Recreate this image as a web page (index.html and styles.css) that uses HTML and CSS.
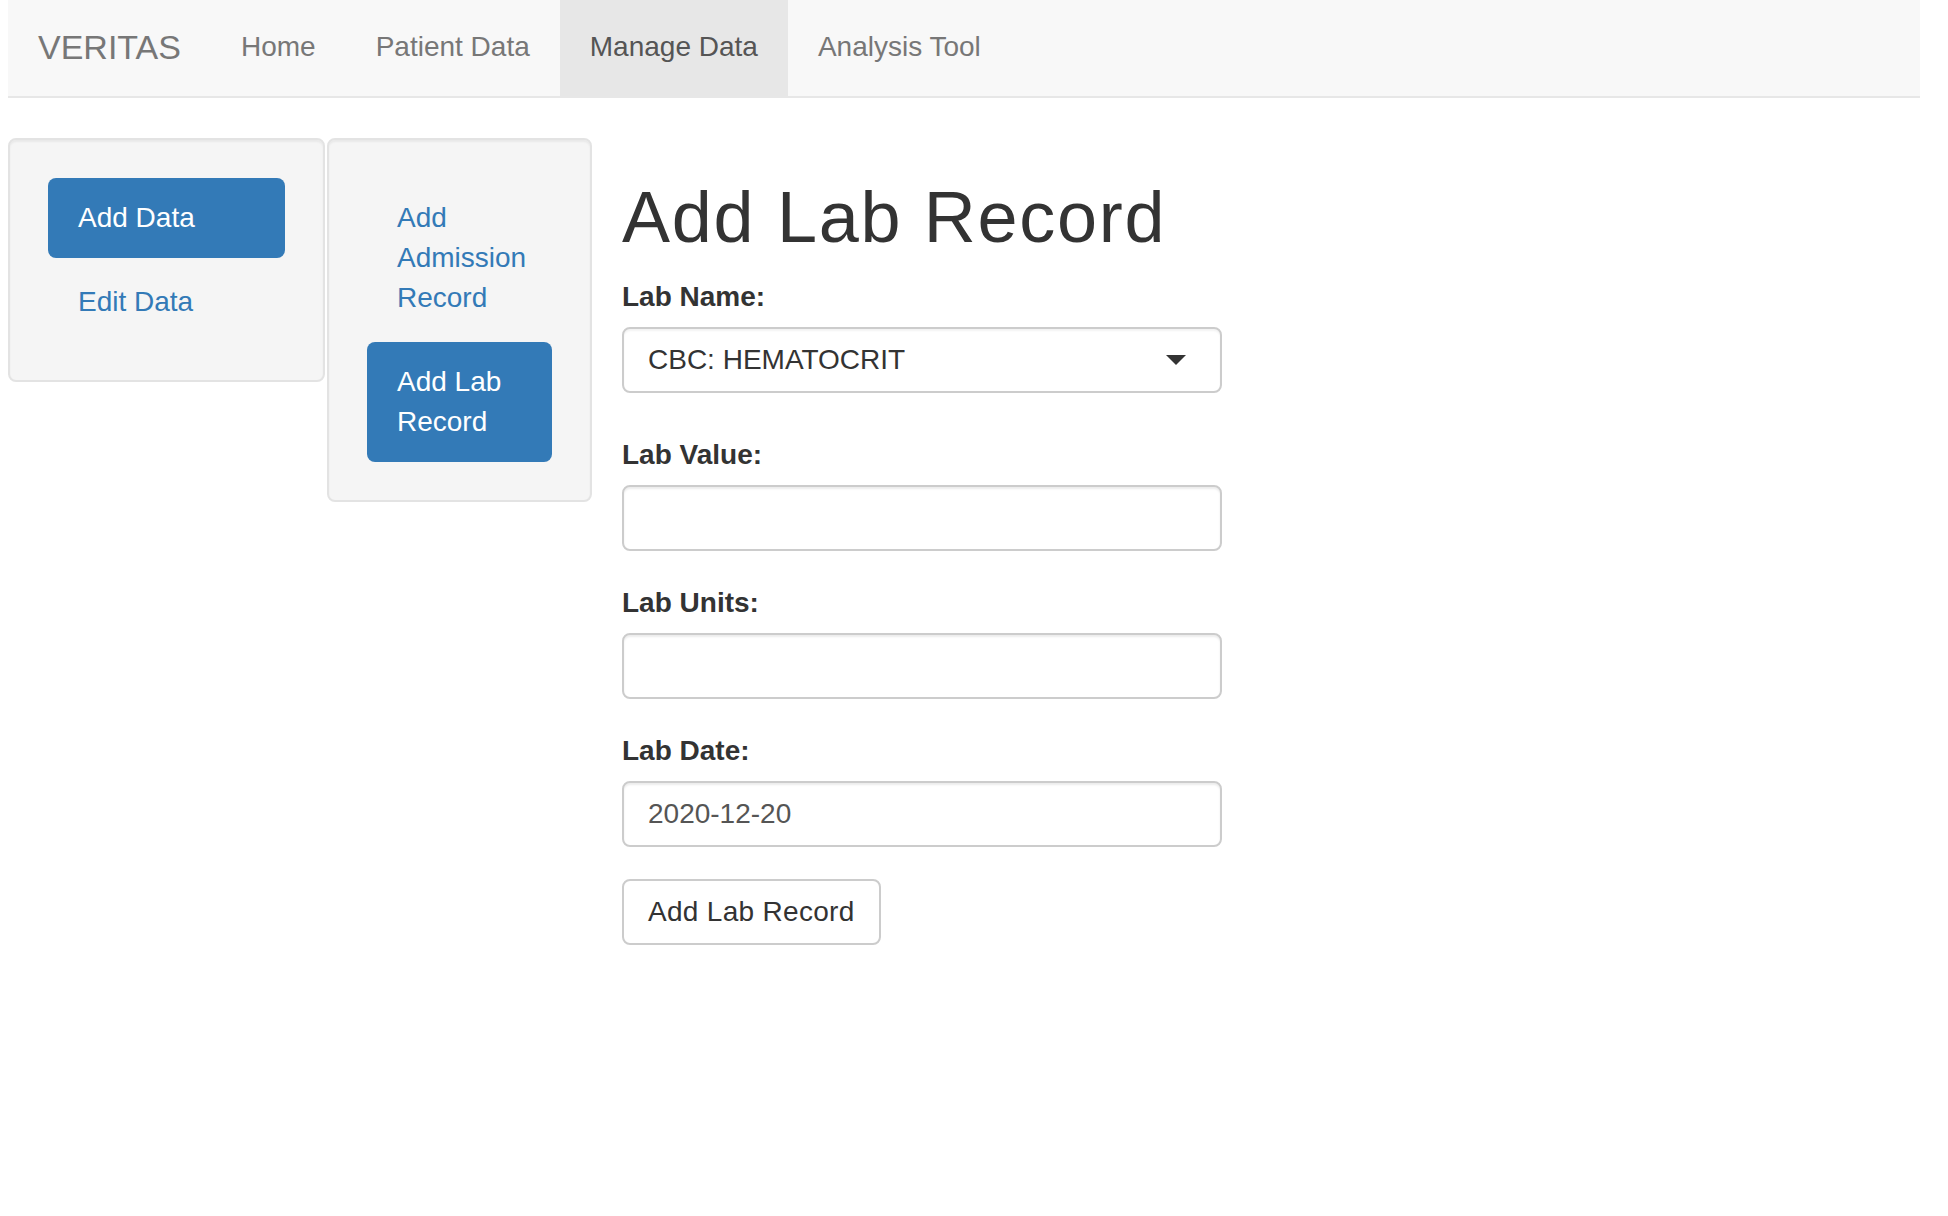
FILE: index.html
```html
<!DOCTYPE html>
<html lang="en">
<head>
<meta charset="utf-8">
<title>VERITAS</title>
<link rel="stylesheet" href="styles.css">
</head>
<body>
<nav class="navbar">
  <span class="brand">VERITAS</span>
  <ul class="nav">
    <li><a>Home</a></li>
    <li><a>Patient Data</a></li>
    <li class="active"><a>Manage Data</a></li>
    <li><a>Analysis Tool</a></li>
  </ul>
</nav>
<div class="page">
  <div class="well well-1">
    <ul class="pills">
      <li class="active"><a>Add Data</a></li>
      <li><a>Edit Data</a></li>
    </ul>
  </div>
  <div class="well well-2">
    <ul class="pills">
      <li><a>Add Admission Record</a></li>
      <li class="active"><a>Add Lab Record</a></li>
    </ul>
  </div>
  <main class="main">
    <h1 class="title">Add Lab Record</h1>
    <div class="group group-select">
      <label class="label">Lab Name:</label>
      <div class="field select"><span>CBC: HEMATOCRIT</span><span class="caret"></span></div>
    </div>
    <div class="group">
      <label class="label">Lab Value:</label>
      <div class="field"></div>
    </div>
    <div class="group">
      <label class="label">Lab Units:</label>
      <div class="field"></div>
    </div>
    <div class="group">
      <label class="label">Lab Date:</label>
      <div class="field date">2020-12-20</div>
    </div>
    <button class="btn">Add Lab Record</button>
  </main>
</div>
</body>
</html>
```
FILE: styles.css
```css
body {
  margin: 0;
  font-family: "Liberation Sans", Arial, Helvetica, sans-serif;
  font-size: 28px;
  line-height: 40px;
  color: #333;
  background: #fff;
}

.navbar {
  margin-left: 8px;
  width: 1912px;
  height: 96px;
  background: #f8f8f8;
  border-bottom: 2px solid #e7e7e7;
  display: flex;
}

.brand {
  padding: 27px 30px 29px 30px;
  font-size: 34px;
  line-height: 40px;
  color: #777;
}

.nav {
  display: flex;
  margin: 0;
  padding: 0;
  list-style: none;
}

.nav a {
  display: block;
  padding: 27px 30px 29px;
  color: #777;
  line-height: 40px;
}

.nav .active a {
  background: #e7e7e7;
  color: #555;
}

.page {
  display: flex;
  align-items: flex-start;
  padding-left: 8px;
  margin-top: 40px;
}

.well {
  box-sizing: border-box;
  background: #f5f5f5;
  border: 2px solid #e3e3e3;
  border-radius: 8px;
  padding: 38px;
  box-shadow: inset 0 2px 2px rgba(0, 0, 0, 0.05);
}

.well-1 {
  width: 317px;
}

.well-2 {
  width: 265px;
  margin-left: 2px;
}

.pills {
  list-style: none;
  margin: 0;
  padding: 0;
  display: flex;
  flex-direction: column;
  gap: 4px;
}

.pills a {
  display: block;
  padding: 20px 30px;
  border-radius: 8px;
  color: #337ab7;
}

.pills .active a {
  background: #337ab7;
  color: #fff;
}

.main {
  margin-left: 30px;
}

.title {
  font-size: 72px;
  line-height: 79px;
  margin: 40px 0 20px;
  font-weight: normal;
  letter-spacing: 1.7px;
}

.label {
  display: block;
  font-weight: bold;
  margin-bottom: 10px;
}

.group {
  margin-bottom: 32px;
}

.group-select {
  margin-bottom: 42px;
}

.field {
  box-sizing: border-box;
  width: 600px;
  height: 66px;
  border: 2px solid #ccc;
  border-radius: 8px;
  box-shadow: inset 0 2px 2px rgba(0, 0, 0, 0.075);
  padding: 0 24px;
  display: flex;
  align-items: center;
  background: #fff;
}

.select {
  box-shadow: inset 0 2px 2px rgba(0, 0, 0, 0.05);
}

.caret {
  margin-left: auto;
  margin-right: 10px;
  width: 0;
  height: 0;
  border-left: 10px solid transparent;
  border-right: 10px solid transparent;
  border-top: 10px solid #333;
}

.date {
  color: #555;
}

.btn {
  box-sizing: border-box;
  height: 66px;
  padding: 0 24px;
  border: 2px solid #ccc;
  border-radius: 8px;
  background: #fff;
  color: #333;
  font-family: inherit;
  font-size: 28px;
  line-height: 40px;
  letter-spacing: 0.3px;
}
```
